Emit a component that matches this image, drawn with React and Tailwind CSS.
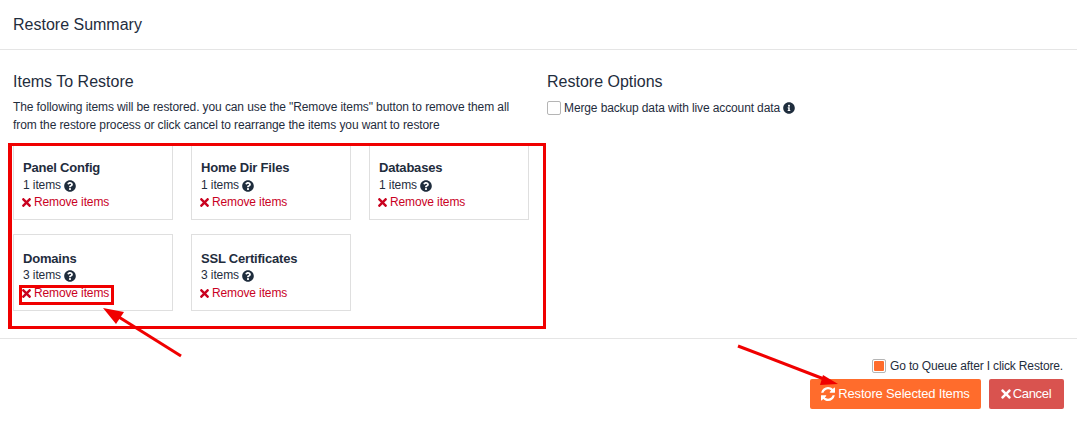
import { FaQuestionCircle, FaTimes, FaInfoCircle } from 'react-icons/fa'

const items = [
  { name: 'Panel Config', count: 1 },
  { name: 'Home Dir Files', count: 1 },
  { name: 'Databases', count: 1 },
  { name: 'Domains', count: 3 },
  { name: 'SSL Certificates', count: 3 },
]

// font awesome 4 style refresh glyph, the package's FaSync is thinner
function RefreshIcon() {
  return (
    <svg width="14" height="14" viewBox="0 128 1536 1536" fill="currentColor">
      <path d="M1511 1056q0 5-1 7-64 268-268 434.5t-478 166.5q-146 0-282.5-55t-243.5-157l-129 129q-19 19-45 19t-45-19-19-45v-448q0-26 19-45t45-19h448q26 0 45 19t19 45-19 45l-137 137q71 66 161 102t187 36q134 0 250-65t186-179q11-17 53-117 8-23 30-23h192q13 0 22.5 9.5t9.5 22.5zm25-800v448q0 26-19 45t-45 19h-448q-26 0-45-19t-19-45 19-45l138-138q-148-137-349-137-134 0-250 65t-186 179q-11 17-53 117-8 23-30 23h-199q-13 0-22.5-9.5t-9.5-22.5v-7q65-268 270-434.5t480-166.5q146 0 284 55.5t245 156.5l130-129q19-19 45-19t45 19 19 45z" />
    </svg>
  )
}

function ItemCard({ name, count, tall }) {
  return (
    <div className={`border border-[#dfdfdf] pl-[9px] ${tall ? 'h-[77px] pt-[15px]' : 'h-[75px] pt-[13px]'}`}>
      <div className="text-[13px] leading-[17px] font-bold tracking-[-0.2px]">{name}</div>
      <div className={`flex items-center gap-[3px] text-[12px] leading-[17px] tracking-[-0.1px] ${tall ? '' : 'mt-px'}`}>
        {count} items <FaQuestionCircle className="text-[12px]" />
      </div>
      <div className={`-ml-[3px] flex items-center gap-px text-[12px] leading-[17px] tracking-[-0.13px] text-[#c9021f] ${tall ? 'mt-px' : ''}`}>
        <FaTimes className="text-[13px]" /> Remove items
      </div>
    </div>
  )
}

export default function App() {
  return (
    <div className="relative h-[427px] w-[1077px] overflow-hidden bg-white font-['Liberation_Sans',sans-serif] text-[#1f2d3d]">
      <div className="h-[50px] border-b border-[#e5e5e5] pl-[13px] pt-[15px] text-[16px] leading-[20px]">Restore Summary</div>

      <div className="flex h-[289px] border-b border-[#e5e5e5] pl-[13px]">
        <div className="w-[534px]">
          <h2 className="mt-[22px] text-[16px] leading-[20px]">Items To Restore</h2>
          <p className="mt-[6px] text-[12px] leading-[18px] tracking-[-0.1px]">
            The following items will be restored. you can use the "Remove items" button to remove them all<br />
            from the restore process or click cancel to rearrange the items you want to restore
          </p>
          <div className="mt-[11px] grid w-[516px] grid-cols-3 gap-x-[18px] gap-y-[14px]">
            {items.map((item, i) => (
              <ItemCard key={item.name} {...item} tall={i > 2} />
            ))}
          </div>
        </div>
        <div>
          <h2 className="mt-[22px] text-[16px] leading-[20px]">Restore Options</h2>
          <label className="mt-[7px] flex items-center gap-[3px] text-[12px] leading-[18px] tracking-[-0.12px]">
            <span className="h-[14px] w-[14px] rounded-[2px] border border-[#b5b5b5] bg-white" />
            Merge backup data with live account data
            <FaInfoCircle className="text-[12px]" />
          </label>
        </div>
      </div>

      <div className="flex flex-col items-end pr-[13px] pt-[19px]">
        <label className="mr-px flex items-center gap-1 text-[12px] leading-[16px] tracking-[-0.15px]">
          <span className="flex h-[14px] w-[14px] items-center justify-center rounded-[2px] border border-[#b5b5b5] bg-white">
            <span className="h-[10px] w-[10px] rounded-[1px] bg-[#ff6c2c]" />
          </span>
          Go to Queue after I click Restore.
        </label>
        <div className="mt-[5px] flex gap-2">
          <button className="flex h-[30px] w-[171px] items-center justify-center gap-[3px] rounded-[2px] bg-[#ff6c2c] pb-px text-[13px] tracking-[-0.17px] text-white">
            <RefreshIcon /> Restore Selected Items
          </button>
          <button className="flex h-[30px] w-[75px] items-center justify-center rounded-[2px] bg-[#d9534f] pb-px pr-[3px] text-[13px] tracking-[-0.3px] text-white">
            <FaTimes className="text-[14px]" /> Cancel
          </button>
        </div>
      </div>

      {/* red annotations on top of the screenshot */}
      <div className="absolute left-[8px] top-[143px] h-[186px] w-[538px] border-[3px] border-l-4 border-[#f00000]" />
      <div className="absolute left-[19px] top-[285px] h-[20px] w-[95px] border-[3px] border-[#f00000]" />
      <svg className="absolute left-0 top-0" width="1077" height="427" fill="none">
        <path d="M181 356 L114 314" stroke="#f00000" strokeWidth="3" />
        <path d="M103 308 L124 312 L116 324 Z" fill="#f00000" />
        <path d="M738 346 L824 379" stroke="#f00000" strokeWidth="3" />
        <path d="M838 384 L823 375 L820 385 Z" fill="#f00000" />
      </svg>
    </div>
  )
}
